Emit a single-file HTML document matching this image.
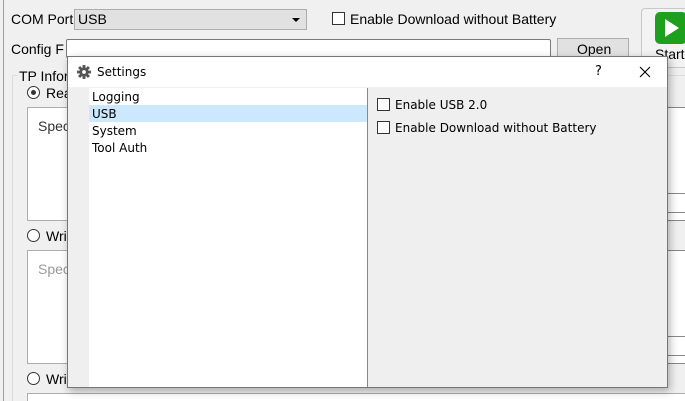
<!DOCTYPE html>
<html style="width:685px;height:401px;overflow:hidden"><head><meta charset="utf-8"><style>
*{box-sizing:border-box;margin:0;padding:0}
body{width:685px;height:401px;overflow:hidden;background:#f0f0f0;position:relative;font-family:"Liberation Sans",sans-serif;font-size:14px;color:#000}
.a{position:absolute}
.t{position:absolute;white-space:nowrap}
.d{font-family:"DejaVu Sans",sans-serif;font-size:12px}
.cb{position:absolute;width:13px;height:13px;border:1px solid #333;background:#fff}
.rb{position:absolute;width:13px;height:13px;border:1px solid #333;border-radius:50%;background:#fff}
</style></head><body>
<div class="a" style="left:3px;top:0;width:1px;height:401px;background:#a0a0a0"></div>
<div class="t" style="left:11px;top:11px">COM Port</div>
<div class="a" style="left:74px;top:9px;width:233px;height:21px;background:#e1e1e1;border:1px solid #adadad"></div>
<div class="t" style="left:78px;top:11px">USB</div>
<div class="a" style="left:292px;top:18px;width:0;height:0;border-left:4px solid transparent;border-right:4px solid transparent;border-top:4px solid #000"></div>
<div class="cb" style="left:332px;top:12px"></div>
<div class="t" style="left:350px;top:11px">Enable Download without Battery</div>
<div class="t" style="left:11px;top:41px">Config F</div>
<div class="a" style="left:66px;top:39px;width:485px;height:19px;background:#fff;border:1px solid #7a7a7a;border-radius:2px"></div>
<div class="a" style="left:557px;top:38px;width:72px;height:22px;background:#e1e1e1;border:1px solid #adadad"></div>
<div class="t" style="left:577px;top:41px">Open</div>
<div class="a" style="left:641px;top:8px;width:50px;height:60px;border:1px solid #c8c8c8;border-radius:4px;background:#f3f3f3"></div>
<div class="a" style="left:655px;top:12px;width:32px;height:32px;background:#1ea01e;border-radius:5px"></div>
<svg class="a" style="left:663px;top:18px" width="18" height="20"><path d="M2 1 L16 10 L2 19 Z" fill="#fff"/></svg>
<div class="t" style="left:655px;top:46px">Start</div>
<div class="a" style="left:12px;top:75px;width:700px;height:326px;border:1px solid #dcdcdc;border-bottom:none"></div>
<div class="t" style="left:18px;top:68px;background:#f0f0f0;padding:0 1px">TP Infor</div>
<div class="rb" style="left:27px;top:86px"></div><div class="a" style="left:31px;top:90px;width:5px;height:5px;border-radius:50%;background:#333"></div>
<div class="t" style="left:46px;top:85px">Rea</div>
<div class="a" style="left:27px;top:107px;width:700px;height:114px;background:#fff;border:1px solid #adadad"></div>
<div class="t" style="left:38px;top:118px;color:#333">Spec</div>
<div class="rb" style="left:27px;top:229px"></div>
<div class="t" style="left:46px;top:228px">Wri</div>
<div class="a" style="left:27px;top:250px;width:700px;height:114px;background:#fff;border:1px solid #adadad"></div>
<div class="t" style="left:38px;top:261px;color:#999">Spec</div>
<div class="rb" style="left:27px;top:372px"></div>
<div class="t" style="left:46px;top:371px">Wri</div>
<div class="a" style="left:27px;top:393px;width:700px;height:8px;background:#fff;border:1px solid #adadad;border-bottom:none"></div>
<div class="a" style="left:641px;top:107px;width:50px;height:1px;background:#888"></div>
<div class="a" style="left:641px;top:193px;width:50px;height:1px;background:#888"></div>
<div class="a" style="left:641px;top:212px;width:50px;height:1px;background:#888"></div>
<div class="a" style="left:641px;top:220px;width:50px;height:1px;background:#888"></div>
<div class="a" style="left:641px;top:250px;width:50px;height:1px;background:#888"></div>
<div class="a" style="left:641px;top:336px;width:50px;height:1px;background:#888"></div>
<div class="a" style="left:641px;top:355px;width:50px;height:1px;background:#888"></div>
<div class="a" style="left:641px;top:363px;width:50px;height:1px;background:#888"></div>
<!-- dialog -->
<div class="a" style="left:67px;top:56px;width:601px;height:332px;background:#efefef;border:1px solid #777;box-shadow:2px 3px 8px rgba(0,0,0,.3)">
 <div class="a" style="left:0;top:0;width:599px;height:30px;background:#fff"></div>
 <svg class="a" style="left:9px;top:8px" width="14" height="14" viewBox="0 0 14 14"><g fill="#555"><circle cx="7" cy="7" r="4.6"/><rect x="5.6" y="0" width="2.8" height="14"/><rect x="0" y="5.6" width="14" height="2.8"/><rect x="5.6" y="0" width="2.8" height="14" transform="rotate(45 7 7)"/><rect x="5.6" y="0" width="2.8" height="14" transform="rotate(-45 7 7)"/></g><circle cx="7" cy="7" r="1.9" fill="#fff"/></svg>
 <div class="t d" style="left:29px;top:8px">Settings</div>
 <div class="t d" style="left:527px;top:7px;font-size:13px">?</div>
 <svg class="a" style="left:571px;top:9px" width="12" height="12"><path d="M1 1 L11 11 M11 1 L1 11" stroke="#000" stroke-width="1.1"/></svg>
 <div class="a" style="left:21px;top:31px;width:279px;height:299px;background:#fff;border-right:1px solid #888"></div>
 <div class="a" style="left:21px;top:48px;width:278px;height:17px;background:#cce8ff"></div>
 <div class="t d" style="left:24px;top:33px">Logging</div>
 <div class="t d" style="left:24px;top:50px">USB</div>
 <div class="t d" style="left:24px;top:67px">System</div>
 <div class="t d" style="left:24px;top:84px">Tool Auth</div>
 <div class="cb" style="left:309px;top:41px"></div>
 <div class="t d" style="left:327px;top:41px">Enable USB 2.0</div>
 <div class="cb" style="left:309px;top:64px"></div>
 <div class="t d" style="left:327px;top:64px">Enable Download without Battery</div>
</div>
</body></html>
